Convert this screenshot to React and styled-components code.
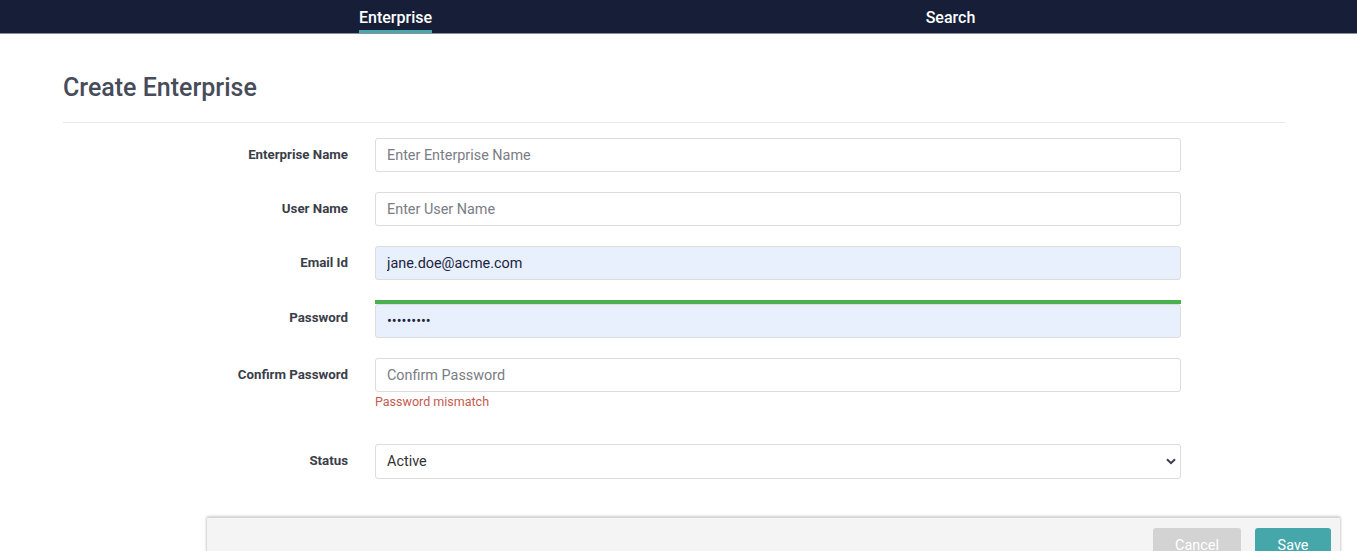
import React from 'react'
import styled, {createGlobalStyle} from 'styled-components'

const Global = createGlobalStyle`
  body {
    margin: 0;
    background: #fff;
    font-family: Roboto, "Liberation Sans", Arial, sans-serif;
    overflow: hidden;
  }
  * { box-sizing: border-box; }
`

const NavBar = styled.nav`
  height: 34px;
  background: #171f38;
  border-bottom: 1px solid #8a8f9c;
  display: flex;
  padding-left: 118px;
`

const Tab = styled.div`
  width: 555px;
  display: flex;
  justify-content: center;
`

const TabLabel = styled.span`
  height: 33px;
  padding-top: 8px;
  font-size: 16px;
  font-weight: 500;
  color: #fff;
  border-bottom: 3px solid ${({$active}) => ($active ? '#4aa8ab' : 'transparent')};
`

const Page = styled.main`
  padding: 0 72px 0 63px;
`

const Heading = styled.h1`
  margin: 40px 0 0;
  padding-bottom: 20px;
  font-size: 25px;
  line-height: 28px;
  font-weight: 500;
  color: #474c5a;
  border-bottom: 1px solid #e8e8e8;
`

const Form = styled.form`
  margin: 15px 0 0 144px;
  display: flex;
  flex-direction: column;
  gap: 20px;
`

const Row = styled.div`
  display: grid;
  grid-template-columns: 141px 806px;
  column-gap: 27px;
  align-items: start;
  margin-top: ${({$gapAbove}) => $gapAbove || 0}px;
`

const Label = styled.label`
  text-align: right;
  font-size: 13.3px;
  font-weight: 700;
  line-height: 34px;
  color: #3a3e49;
  margin-top: ${({$shift}) => $shift || 0}px;
`

const Field = styled.div`
  position: relative;
  display: flex;
  flex-direction: column;
`

const Input = styled.input`
  height: 34px;
  width: 100%;
  padding: 0 11px;
  font-family: inherit;
  font-size: 14.4px;
  color: #1c2440;
  background: ${({$filled}) => ($filled ? '#e8f0fe' : '#fff')};
  border: 1px solid #dcdcdc;
  border-radius: 3px;
  outline: none;

  &::placeholder {
    color: #7a7d85;
  }
`

const Strength = styled.div`
  height: 4px;
  background: #4caf50;
`

const ErrorText = styled.div`
  margin-top: 2px;
  font-size: 12.5px;
  line-height: 16px;
  color: #c55a4e;
`

const Select = styled.select`
  height: 35px;
  width: 100%;
  padding: 0 11px;
  font-family: inherit;
  font-size: 14.4px;
  color: #333;
  background: #fff;
  border: 1px solid #dcdcdc;
  border-radius: 3px;
  appearance: none;
  outline: none;
`

const Chevron = styled.svg`
  position: absolute;
  right: 5px;
  top: 14px;
  pointer-events: none;
`

const Footer = styled.footer`
  margin: 38px -55px 0 144px;
  height: 60px;
  background: #f4f4f4;
  box-shadow: 0 0 3px rgba(0, 0, 0, 0.35);
  border-top: 1px solid #d6d6d6;
  display: flex;
  justify-content: flex-end;
  align-items: flex-start;
  gap: 14px;
  padding: 10px 9px 0 0;
`

const Button = styled.button`
  height: 34px;
  width: ${({$w}) => $w}px;
  border: none;
  border-radius: 3px;
  font-family: inherit;
  font-size: 14.4px;
  color: #fff;
  background: ${({$primary}) => ($primary ? '#45a7aa' : '#d3d3d3')};
`

export default function App() {
  return (
    <>
      <Global />
      <NavBar>
        <Tab><TabLabel $active>Enterprise</TabLabel></Tab>
        <Tab><TabLabel>Search</TabLabel></Tab>
      </NavBar>
      <Page>
        <Heading>Create Enterprise</Heading>
        <Form onSubmit={e => e.preventDefault()}>
          <Row>
            <Label>Enterprise Name</Label>
            <Field><Input placeholder="Enter Enterprise Name" /></Field>
          </Row>
          <Row>
            <Label>User Name</Label>
            <Field><Input placeholder="Enter User Name" /></Field>
          </Row>
          <Row>
            <Label>Email Id</Label>
            <Field><Input $filled defaultValue="jane.doe@acme.com" /></Field>
          </Row>
          <Row>
            <Label $shift={1}>Password</Label>
            <Field>
              <Strength />
              <Input $filled type="password" defaultValue="123456789" />
            </Field>
          </Row>
          <Row>
            <Label>Confirm Password</Label>
            <Field>
              <Input type="password" placeholder="Confirm Password" />
              <ErrorText>Password mismatch</ErrorText>
            </Field>
          </Row>
          <Row $gapAbove={14}>
            <Label>Status</Label>
            <Field>
              <Select defaultValue="Active">
                <option>Active</option>
                <option>Inactive</option>
              </Select>
              <Chevron width="10" height="7" viewBox="0 0 10 7">
                <path d="M1 1.2 L5 5.2 L9 1.2" fill="none" stroke="#3b3f4d" strokeWidth="2" />
              </Chevron>
            </Field>
          </Row>
        </Form>
        <Footer>
          <Button type="button" $w={88}>Cancel</Button>
          <Button type="button" $w={76} $primary>Save</Button>
        </Footer>
      </Page>
    </>
  )
}
